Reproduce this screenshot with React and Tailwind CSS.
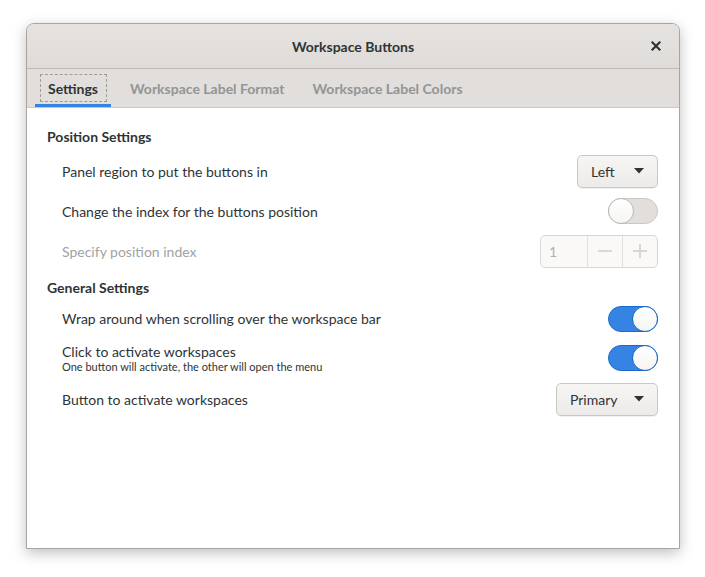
const font = { fontFamily: "Lato, 'Noto Sans', sans-serif" };

function Toggle({ on }) {
    return (
        <div
            className={
                "w-[50px] h-[26px] rounded-full border flex items-center " +
                (on ? "bg-[#3584e4] border-[#1b6acb] justify-end" : "bg-[#e1dedb] border-[#cdc7c2] justify-start")
            }
        >
            <div
                className={
                    "w-[26px] h-[26px] -m-px rounded-full bg-gradient-to-b from-white to-[#f6f5f4] border " +
                    (on ? "border-[#1b6acb]" : "border-[#bfb8b1]")
                }
            />
        </div>
    );
}

function Dropdown({ label, width }) {
    return (
        <div
            className={
                "h-[33px] rounded-[5px] border border-[#cdc7c2] bg-gradient-to-b from-[#f6f5f4] to-[#edebe9] flex items-center justify-between pl-[13px] pr-[13px] text-[#2e3436] shadow-[0_1px_0_rgba(0,0,0,0.06)] " +
                width
            }
        >
            <span>{label}</span>
            <svg width="10" height="6" viewBox="0 0 10 6">
                <path d="M0 0 L10 0 L5 5.5 Z" fill="#2e3436" />
            </svg>
        </div>
    );
}

function Row({ children, control, className }) {
    return (
        <div className={"flex items-center justify-between pl-[15px] " + className}>
            <div>{children}</div>
            {control}
        </div>
    );
}

export default function App() {
    return (
        <div className="w-[705px] h-[577px] bg-white pt-[23px] pl-[26px]" style={font}>
            <div className="w-[654px] h-[526px] border border-[#a9a49f] rounded-t-[8px] bg-white flex flex-col shadow-[0_4px_14px_rgba(0,0,0,0.25)] overflow-hidden">
                <div className="h-[45px] shrink-0 bg-gradient-to-b from-[#e5e2df] to-[#dedbd8] border-b border-[#c0bab4] flex items-center justify-center relative">
                    <span className="text-[14px] font-bold text-[#2e3436]">Workspace Buttons</span>
                    <svg className="absolute right-[18px] top-[17px]" width="10" height="10" viewBox="0 0 10 10">
                        <path d="M1.5 1.5 L8.5 8.5 M8.5 1.5 L1.5 8.5" stroke="#2e3436" strokeWidth="2.2" strokeLinecap="square" />
                    </svg>
                </div>

                <div className="h-[39px] shrink-0 bg-[#e1dedb] border-b border-[#cdc7c2] flex items-end pl-[8px] text-[14px] font-bold">
                    <div className="w-[76px] h-full flex flex-col items-center justify-end border-b-[3px] border-[#3584e4]">
                        <div className="w-[67px] h-[28px] mb-[2px] border border-dashed border-[#a09b96] flex items-center justify-center text-[#2e3436]">
                            Settings
                        </div>
                    </div>
                    <div className="h-full flex items-center pl-[19px] text-[#929595]">Workspace Label Format</div>
                    <div className="h-full flex items-center pl-[28px] text-[#929595]">Workspace Label Colors</div>
                </div>

                <div className="flex-1 pl-[20px] pr-[21px] pt-[17px] text-[14px] text-[#2e3436]">
                    <div className="h-[22px] flex items-center font-bold">Position Settings</div>

                    <Row className="h-[40px] mt-[4px]" control={<Dropdown label="Left" width="w-[81px]" />}>
                        Panel region to put the buttons in
                    </Row>
                    <Row className="h-[40px]" control={<Toggle on={false} />}>
                        Change the index for the buttons position
                    </Row>
                    <Row
                        className="h-[40px] text-[#a0a3a4]"
                        control={
                            <div className="w-[118px] h-[33px] rounded-[5px] border border-[#dad6d2] bg-[#faf9f8] flex">
                                <div className="w-[46px] flex items-center pl-[8px] text-[#aeb0b1]">1</div>
                                <div className="w-[35px] border-l border-[#e3e0dd] flex items-center justify-center">
                                    <svg width="14" height="14" viewBox="0 0 14 14">
                                        <path d="M0 7 H14" stroke="#cfcccb" strokeWidth="1.5" />
                                    </svg>
                                </div>
                                <div className="flex-1 border-l border-[#e3e0dd] flex items-center justify-center">
                                    <svg width="14" height="14" viewBox="0 0 14 14">
                                        <path d="M0 7 H14 M7 0 V14" stroke="#cfcccb" strokeWidth="1.5" />
                                    </svg>
                                </div>
                            </div>
                        }
                    >
                        Specify position index
                    </Row>

                    <div className="h-[22px] mt-[5px] flex items-center font-bold">General Settings</div>

                    <Row className="h-[41px]" control={<Toggle on />}>
                        Wrap around when scrolling over the workspace bar
                    </Row>
                    <Row className="h-[37px]" control={<Toggle on />}>
                        <div className="leading-[17px]">Click to activate workspaces</div>
                        <div className="text-[11px] leading-[13px]">One button will activate, the other will open the menu</div>
                    </Row>
                    <Row className="h-[46px]" control={<Dropdown label="Primary" width="w-[102px]" />}>
                        Button to activate workspaces
                    </Row>
                </div>
            </div>
        </div>
    );
}
